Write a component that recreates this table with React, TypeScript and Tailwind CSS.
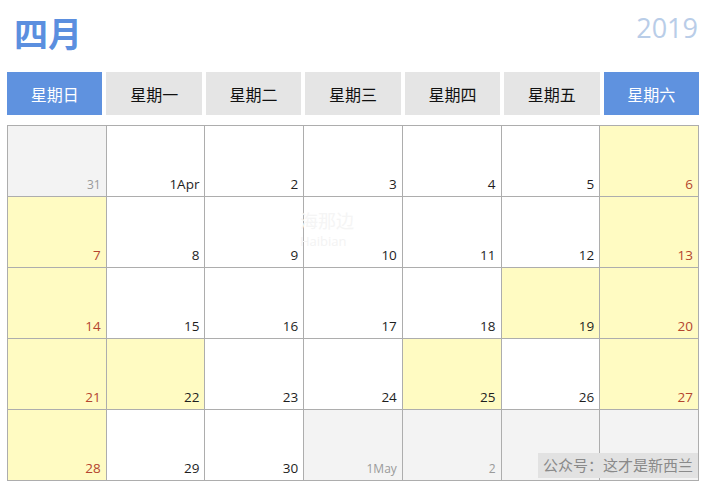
type Day = { label: string; kind: "in" | "out" | "weekend"; bg: "white" | "yellow" | "gray" };

const weekdays = ["星期日", "星期一", "星期二", "星期三", "星期四", "星期五", "星期六"];

function buildDays(): Day[] {
  const days: Day[] = [{ label: "31", kind: "out", bg: "gray" }];
  const holidays = [19, 22, 25];
  for (let d = 1; d <= 30; d++) {
    const col = d % 7; // April 1 2019 is Monday
    const weekend = col === 0 || col === 6;
    days.push({
      label: d === 1 ? "1Apr" : String(d),
      kind: weekend ? "weekend" : "in",
      bg: weekend || holidays.includes(d) ? "yellow" : "white",
    });
  }
  days.push({ label: "1May", kind: "out", bg: "gray" });
  days.push({ label: "2", kind: "out", bg: "gray" });
  days.push({ label: "", kind: "out", bg: "gray" });
  days.push({ label: "", kind: "out", bg: "gray" });
  return days;
}

const bgClass = {
  white: "bg-white",
  yellow: "bg-[#fffbc2]",
  gray: "bg-[#f3f3f3]",
};

const textClass = {
  in: "text-[#1e1e1e] text-[13.5px]",
  out: "text-[#9a9a9a] text-[12px]",
  weekend: "text-[#b4452f] text-[13.5px]",
};

export default function App() {
  const days = buildDays();

  return (
    <div className="relative w-[706px] h-[488px] bg-white overflow-hidden font-['Open_Sans','Noto_Sans_CJK_SC',sans-serif]">
      <div className="flex items-end justify-between pl-[14px] pr-[8px] h-[60px] pb-[10px]">
        <div className="text-[34px] leading-none font-bold text-[#5b8fdf] font-['Noto_Sans_CJK_SC',sans-serif]">四月</div>
        <div className="text-[27px] leading-none text-[#b9cde8] mb-[9px]">2019</div>
      </div>

      <div className="grid grid-cols-7 gap-x-[4px] pl-[7px] pr-[7px] mt-[12px]">
        {weekdays.map((w, i) => {
          const blue = i === 0 || i === 6;
          return (
            <div
              key={w}
              className={`h-[43px] flex items-center justify-center text-[16px] font-['Noto_Sans_CJK_SC',sans-serif] ${
                blue ? "bg-[#5f92df] text-white" : "bg-[#e5e5e5] text-[#111]"
              }`}
            >
              {w}
            </div>
          );
        })}
      </div>

      <div className="ml-[7px] mr-[7px] mt-[10px] grid grid-cols-7 border-t border-l border-[#adadad]">
        {days.map((d, i) => (
          <div
            key={i}
            className={`h-[71px] border-r border-b border-[#adadad] flex items-end justify-end pr-[5px] pb-[2px] ${bgClass[d.bg]} ${textClass[d.kind]}`}
          >
            {d.label}
          </div>
        ))}
      </div>

      <div className="absolute left-[300px] top-[210px] flex flex-col gap-[4px] pointer-events-none select-none">
        <div className="text-[18px] leading-[20px] font-['Noto_Sans_CJK_SC',sans-serif] text-[#f5f5f5]">海那边</div>
        <div className="text-[13px] leading-[14px] text-[#f3f3f3]">Haibian</div>
      </div>

      <div className="absolute right-[8px] top-[453px] h-[25px] px-[5px] bg-[#e2e2e2] text-[#8a8a8a] text-[15px] flex items-center font-['Noto_Sans_CJK_SC',sans-serif]">
        公众号：这才是新西兰
      </div>
    </div>
  );
}
